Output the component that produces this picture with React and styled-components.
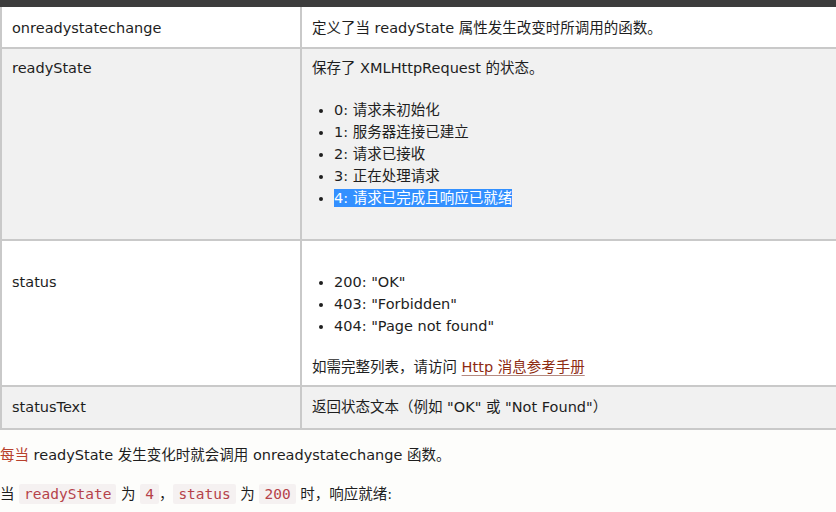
import React from "react";
import styled, { createGlobalStyle } from "styled-components";

const Global = createGlobalStyle`
  html, body { margin: 0; padding: 0; }
  body {
    background: #fdfdfb;
    overflow: hidden;
    font-family: "DejaVu Sans", "Noto Sans CJK SC", sans-serif;
    font-size: 14.5px;
    color: #1e1e1e;
  }
`;

const TopBar = styled.div`
  height: 7px;
  background: #3c3c3c;
`;

const Table = styled.table`
  width: 880px;
  border-collapse: collapse;
  table-layout: fixed;
  line-height: 21px;
`;

const Row = styled.tr`
  background: ${(p) => (p.$shaded ? "#f1f1f1" : "#ffffff")};
  &:first-child td { border-top: none; }
`;

const Cell = styled.td`
  border: 2px solid #c9c9c9;
  padding: ${(p) => p.$pad || "10px 10px"};
  vertical-align: baseline;
  width: ${(p) => (p.$name ? "278px" : "auto")};
`;

const Para = styled.p`
  margin: 0;
`;

const List = styled.ul`
  margin: ${(p) => p.$m || "20px 0 20px"};
  padding-left: 22px;
  line-height: 22px;
  list-style: disc;
`;

const Selected = styled.span`
  background: #3390ff;
  color: #fff;
  padding: 1px 0;
`;

const Link = styled.a`
  color: #8e2b12;
  text-decoration: underline;
  text-decoration-color: #b58a80;
  text-underline-offset: 3px;
`;

const Text = styled.p`
  margin: ${(p) => p.$m || "0"};
  line-height: 22px;
`;

const Mark = styled.span`
  color: #b8402c;
`;

const Code = styled.code`
  font-family: "DejaVu Sans Mono", "Liberation Mono", monospace;
  font-size: 14.5px;
  color: #b5424a;
  background: #f5f1f1;
  padding: 2px 5px;
  border-radius: 2px;
`;

export default function App() {
  return (
    <>
      <Global />
      <TopBar />
      <Table>
        <tbody>
          <Row>
            <Cell $name $pad="11px 10px 8px">onreadystatechange</Cell>
            <Cell $pad="11px 10px 8px">定义了当 readyState 属性发生改变时所调用的函数。</Cell>
          </Row>
          <Row $shaded>
            <Cell $name $pad="9px 10px 10px">readyState</Cell>
            <Cell $pad="9px 10px 10px">
              <Para>保存了 XMLHttpRequest 的状态。</Para>
              <List>
                <li>0: 请求未初始化</li>
                <li>1: 服务器连接已建立</li>
                <li>2: 请求已接收</li>
                <li>3: 正在处理请求</li>
                <li>
                  <Selected>4: 请求已完成且响应已就绪</Selected>
                </li>
              </List>
            </Cell>
          </Row>
          <Row>
            <Cell $name $pad="10px 10px 7px">status</Cell>
            <Cell $pad="10px 10px 7px">
              <List>
                <li>200: "OK"</li>
                <li>403: "Forbidden"</li>
                <li>404: "Page not found"</li>
              </List>
              <Para>
                如需完整列表，请访问 <Link href="#">Http 消息参考手册</Link>
              </Para>
            </Cell>
          </Row>
          <Row $shaded>
            <Cell $name>statusText</Cell>
            <Cell>返回状态文本（例如 "OK" 或 "Not Found"）</Cell>
          </Row>
        </tbody>
      </Table>
      <Text $m="14px 0 0">
        <Mark>每当</Mark> readyState 发生变化时就会调用 onreadystatechange 函数。
      </Text>
      <Text $m="17px 0 0">
        当 <Code>readyState</Code> 为 <Code>4</Code>，<Code>status</Code> 为{" "}
        <Code>200</Code> 时，响应就绪:
      </Text>
    </>
  );
}
